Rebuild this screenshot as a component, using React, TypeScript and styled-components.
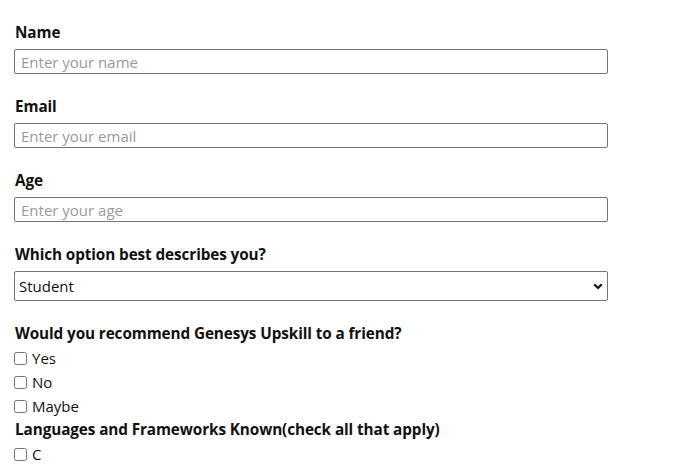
import React from "react";
import styled, { createGlobalStyle } from "styled-components";

const GlobalStyle = createGlobalStyle`
  html, body {
    margin: 0;
    padding: 0;
    background: #ffffff;
  }
  body {
    font-family: "Open Sans", "Noto Sans", "Liberation Sans", sans-serif;
    color: #111111;
  }
`;

const Form = styled.form`
  display: flex;
  flex-direction: column;
  padding: 24px 14px 0 14px;
  width: 594px;
`;

const Field = styled.div`
  display: flex;
  flex-direction: column;
  margin-bottom: 24px;
`;

const Label = styled.label<{ $top?: number }>`
  display: block;
  font-size: 15.3px;
  font-weight: 700;
  line-height: 17px;
  margin-top: ${(p) => p.$top ?? 0}px;
  margin-bottom: 8px;
  padding-left: 1px;
  color: #111111;
  letter-spacing: -0.1px;
`;

const GroupLabel = styled(Label)`
  margin-bottom: 4px;
`;

const TextInput = styled.input`
  box-sizing: border-box;
  width: 100%;
  height: 25px;
  margin: 0;
  padding: 0 6px;
  border: 1px solid #767676;
  border-radius: 2px;
  font-family: inherit;
  font-size: 15px;
  color: #111;
  outline: none;
  &::placeholder {
    color: #9a9a9a;
  }
`;

const SelectWrap = styled.div`
  position: relative;
  width: 100%;
`;

const Select = styled.select`
  box-sizing: border-box;
  width: 100%;
  height: 30px;
  margin: 0;
  padding: 0 24px 0 4px;
  border: 1px solid #767676;
  border-radius: 2px;
  background: #ffffff;
  font-family: inherit;
  font-size: 15px;
  color: #111;
  appearance: none;
  -webkit-appearance: none;
  outline: none;
`;

const Chevron = styled.svg`
  position: absolute;
  right: 5px;
  top: 12px;
  width: 10px;
  height: 7px;
  pointer-events: none;
`;

const Option = styled.label`
  display: flex;
  align-items: center;
  height: 24px;
  font-size: 15px;
  line-height: 22px;
  color: #111;
  gap: 5px;
`;

const Box = styled.input`
  width: 13px;
  height: 13px;
  margin: 0;
  accent-color: #767676;
`;

const Group = styled.div`
  display: flex;
  flex-direction: column;
`;

export default function App() {
  return (
    <>
      <GlobalStyle />
      <Form onSubmit={(e) => e.preventDefault()}>
        <Field>
          <Label htmlFor="name">Name</Label>
          <TextInput id="name" type="text" placeholder="Enter your name" />
        </Field>
        <Field>
          <Label htmlFor="email">Email</Label>
          <TextInput id="email" type="email" placeholder="Enter your email" />
        </Field>
        <Field>
          <Label htmlFor="age">Age</Label>
          <TextInput id="age" type="number" placeholder="Enter your age" />
        </Field>
        <Field>
          <Label htmlFor="role">Which option best describes you?</Label>
          <SelectWrap>
            <Select id="role" defaultValue="student">
              <option value="student">Student</option>
              <option value="fulltime">Full Time Job</option>
              <option value="learner">Full Time Learner</option>
              <option value="other">Other</option>
            </Select>
            <Chevron viewBox="0 0 10 7">
              <path d="M1.2 1.3 L5 5 L8.8 1.3" fill="none" stroke="#111" strokeWidth="2.2" />
            </Chevron>
          </SelectWrap>
        </Field>
        <Group>
          <GroupLabel>Would you recommend Genesys Upskill to a friend?</GroupLabel>
          <Option><Box type="checkbox" />Yes</Option>
          <Option><Box type="checkbox" />No</Option>
          <Option><Box type="checkbox" />Maybe</Option>
        </Group>
        <Group>
          <GroupLabel $top={3}>Languages and Frameworks Known(check all that apply)</GroupLabel>
          <Option><Box type="checkbox" />C</Option>
        </Group>
      </Form>
    </>
  );
}
